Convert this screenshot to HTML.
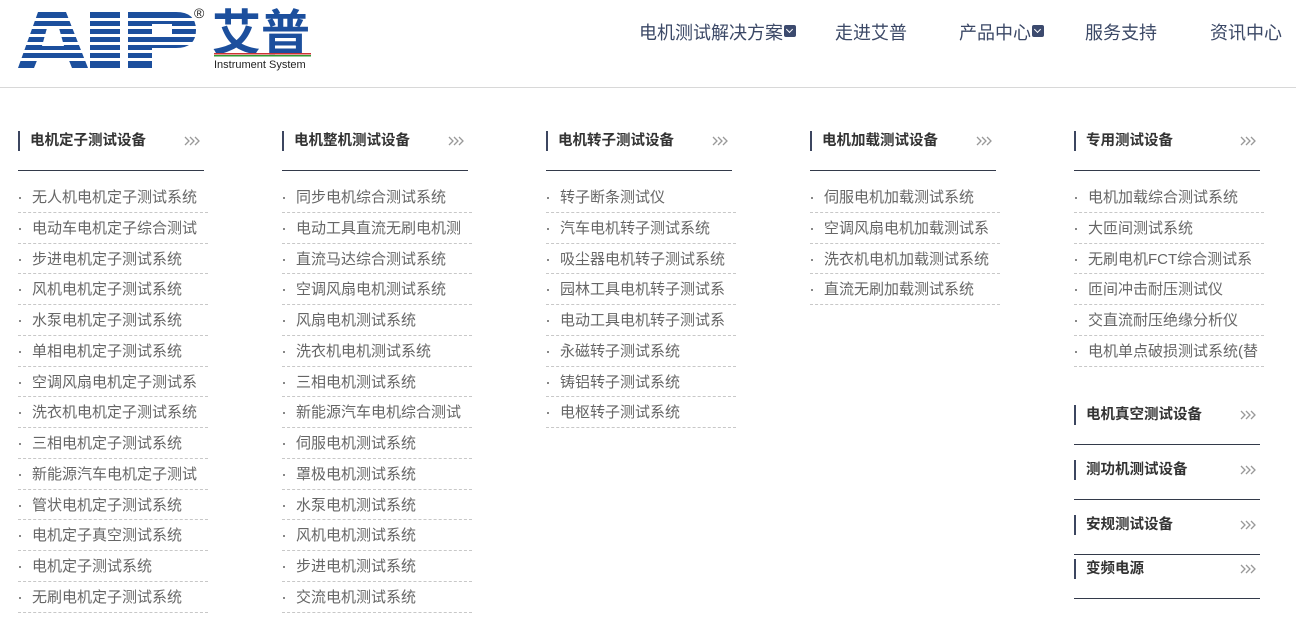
<!DOCTYPE html>
<html><head><meta charset="utf-8">
<style>
*{margin:0;padding:0;box-sizing:border-box}
body{width:1296px;height:619px;background:#fff;position:relative;overflow:hidden;font-family:"Liberation Sans","Noto Sans CJK SC",sans-serif}
.nav{position:absolute;top:21px;font-size:18px;color:#3b4866;line-height:24px;white-space:nowrap}
.dd{display:inline-block;width:12px;height:12px;background:#3c4a6e;border-radius:2px;vertical-align:2px;margin-left:1px;position:relative}
.dd:after{content:"";position:absolute;left:3px;top:2px;width:4px;height:4px;border-right:1.5px solid #fff;border-bottom:1.5px solid #fff;transform:rotate(45deg)}
.hr{position:absolute;left:0;top:87px;width:1296px;height:1px;background:#d8d8d8}
.col{position:absolute;width:190px}
.h{position:absolute;left:0;width:186px;height:40px;border-bottom:1px solid #333a4a}
.h b{position:absolute;left:0;top:0;height:20px;border-left:2px solid #3c4660;padding-left:10px;font-size:14.5px;line-height:20px;color:#333;font-weight:bold;white-space:nowrap}
.h svg{position:absolute;right:4px;top:5px}
ul{position:absolute;left:0;top:182px;list-style:none;width:190px}
li{height:30.77px;border-bottom:1px dashed #c8c8c8;font-size:15px;color:#666;line-height:31px;white-space:nowrap;overflow:hidden;padding-left:14px;position:relative}
li:before{content:"";position:absolute;left:1px;top:15px;width:2px;height:2px;background:#888}
</style></head><body>
<svg style="position:absolute;left:16px;top:6px" width="300" height="66" viewBox="0 0 300 66">
<g fill="#1c4f9d">
<polygon points="22,6 50,6 72,62 56,62 52,52 22,52 18,62 2,62"/>
<rect x="74" y="6" width="30" height="56"/>
<path d="M112 6 H160 Q180 6 180 24 Q180 42 160 42 H136 V62 H112 Z"/>
</g>
<polygon points="31,22 43,22 48,40 26,40" fill="#fff"/>
<rect x="136" y="18" width="20" height="12" fill="#fff"/>
<g fill="#fff">
<rect x="0" y="12" width="185" height="3"/><rect x="0" y="20" width="185" height="3"/><rect x="0" y="28" width="185" height="3"/><rect x="0" y="36" width="185" height="3"/><rect x="0" y="44" width="185" height="3"/><rect x="0" y="52" width="185" height="3"/>
</g>
<text x="178" y="12" font-size="14" fill="#222" font-family="Liberation Sans">®</text>
<text x="196" y="44" font-size="49" font-weight="bold" fill="#1c4f9d" font-family="Noto Sans CJK SC" textLength="98" lengthAdjust="spacingAndGlyphs">艾普</text>
<rect x="198" y="47" width="97" height="1.5" fill="#c33"/><rect x="198" y="49" width="97" height="1.5" fill="#393"/>
<text x="198" y="62" font-size="11" fill="#222" font-family="Liberation Sans">Instrument System</text>
</svg>
<div class="nav" style="left:639px">电机测试解决方案<span class="dd"></span></div>
<div class="nav" style="left:835px">走进艾普</div>
<div class="nav" style="left:959px">产品中心<span class="dd"></span></div>
<div class="nav" style="left:1085px">服务支持</div>
<div class="nav" style="left:1210px">资讯中心</div>
<div class="hr"></div>

<div class="col" style="left:18px;top:0">
<div class="h" style="top:131px"><b>电机定子测试设备</b><svg width="16" height="10" viewBox="0 0 16 10" fill="none" stroke="#999" stroke-width="1.3"><path d="M1 1l4 4-4 4M6 1l4 4-4 4M11 1l4 4-4 4"/></svg></div>
<ul><li>无人机电机定子测试系统</li><li>电动车电机定子综合测试</li><li>步进电机定子测试系统</li><li>风机电机定子测试系统</li><li>水泵电机定子测试系统</li><li>单相电机定子测试系统</li><li>空调风扇电机定子测试系</li><li>洗衣机电机定子测试系统</li><li>三相电机定子测试系统</li><li>新能源汽车电机定子测试</li><li>管状电机定子测试系统</li><li>电机定子真空测试系统</li><li>电机定子测试系统</li><li>无刷电机定子测试系统</li></ul></div>

<div class="col" style="left:282px;top:0">
<div class="h" style="top:131px"><b>电机整机测试设备</b><svg width="16" height="10" viewBox="0 0 16 10" fill="none" stroke="#999" stroke-width="1.3"><path d="M1 1l4 4-4 4M6 1l4 4-4 4M11 1l4 4-4 4"/></svg></div>
<ul><li>同步电机综合测试系统</li><li>电动工具直流无刷电机测</li><li>直流马达综合测试系统</li><li>空调风扇电机测试系统</li><li>风扇电机测试系统</li><li>洗衣机电机测试系统</li><li>三相电机测试系统</li><li>新能源汽车电机综合测试</li><li>伺服电机测试系统</li><li>罩极电机测试系统</li><li>水泵电机测试系统</li><li>风机电机测试系统</li><li>步进电机测试系统</li><li>交流电机测试系统</li></ul></div>

<div class="col" style="left:546px;top:0">
<div class="h" style="top:131px"><b>电机转子测试设备</b><svg width="16" height="10" viewBox="0 0 16 10" fill="none" stroke="#999" stroke-width="1.3"><path d="M1 1l4 4-4 4M6 1l4 4-4 4M11 1l4 4-4 4"/></svg></div>
<ul><li>转子断条测试仪</li><li>汽车电机转子测试系统</li><li>吸尘器电机转子测试系统</li><li>园林工具电机转子测试系</li><li>电动工具电机转子测试系</li><li>永磁转子测试系统</li><li>铸铝转子测试系统</li><li>电枢转子测试系统</li></ul></div>

<div class="col" style="left:810px;top:0">
<div class="h" style="top:131px"><b>电机加载测试设备</b><svg width="16" height="10" viewBox="0 0 16 10" fill="none" stroke="#999" stroke-width="1.3"><path d="M1 1l4 4-4 4M6 1l4 4-4 4M11 1l4 4-4 4"/></svg></div>
<ul><li>伺服电机加载测试系统</li><li>空调风扇电机加载测试系</li><li>洗衣机电机加载测试系统</li><li>直流无刷加载测试系统</li></ul></div>

<div class="col" style="left:1074px;top:0">
<div class="h" style="top:131px"><b>专用测试设备</b><svg width="16" height="10" viewBox="0 0 16 10" fill="none" stroke="#999" stroke-width="1.3"><path d="M1 1l4 4-4 4M6 1l4 4-4 4M11 1l4 4-4 4"/></svg></div>
<ul><li>电机加载综合测试系统</li><li>大匝间测试系统</li><li>无刷电机FCT综合测试系</li><li>匝间冲击耐压测试仪</li><li>交直流耐压绝缘分析仪</li><li>电机单点破损测试系统(替</li></ul>
<div class="h" style="top:405px"><b>电机真空测试设备</b><svg width="16" height="10" viewBox="0 0 16 10" fill="none" stroke="#999" stroke-width="1.3"><path d="M1 1l4 4-4 4M6 1l4 4-4 4M11 1l4 4-4 4"/></svg></div>
<div class="h" style="top:460px"><b>测功机测试设备</b><svg width="16" height="10" viewBox="0 0 16 10" fill="none" stroke="#999" stroke-width="1.3"><path d="M1 1l4 4-4 4M6 1l4 4-4 4M11 1l4 4-4 4"/></svg></div>
<div class="h" style="top:515px"><b>安规测试设备</b><svg width="16" height="10" viewBox="0 0 16 10" fill="none" stroke="#999" stroke-width="1.3"><path d="M1 1l4 4-4 4M6 1l4 4-4 4M11 1l4 4-4 4"/></svg></div>
<div class="h" style="top:559px"><b>变频电源</b><svg width="16" height="10" viewBox="0 0 16 10" fill="none" stroke="#999" stroke-width="1.3"><path d="M1 1l4 4-4 4M6 1l4 4-4 4M11 1l4 4-4 4"/></svg></div>
</div>
</body></html>
